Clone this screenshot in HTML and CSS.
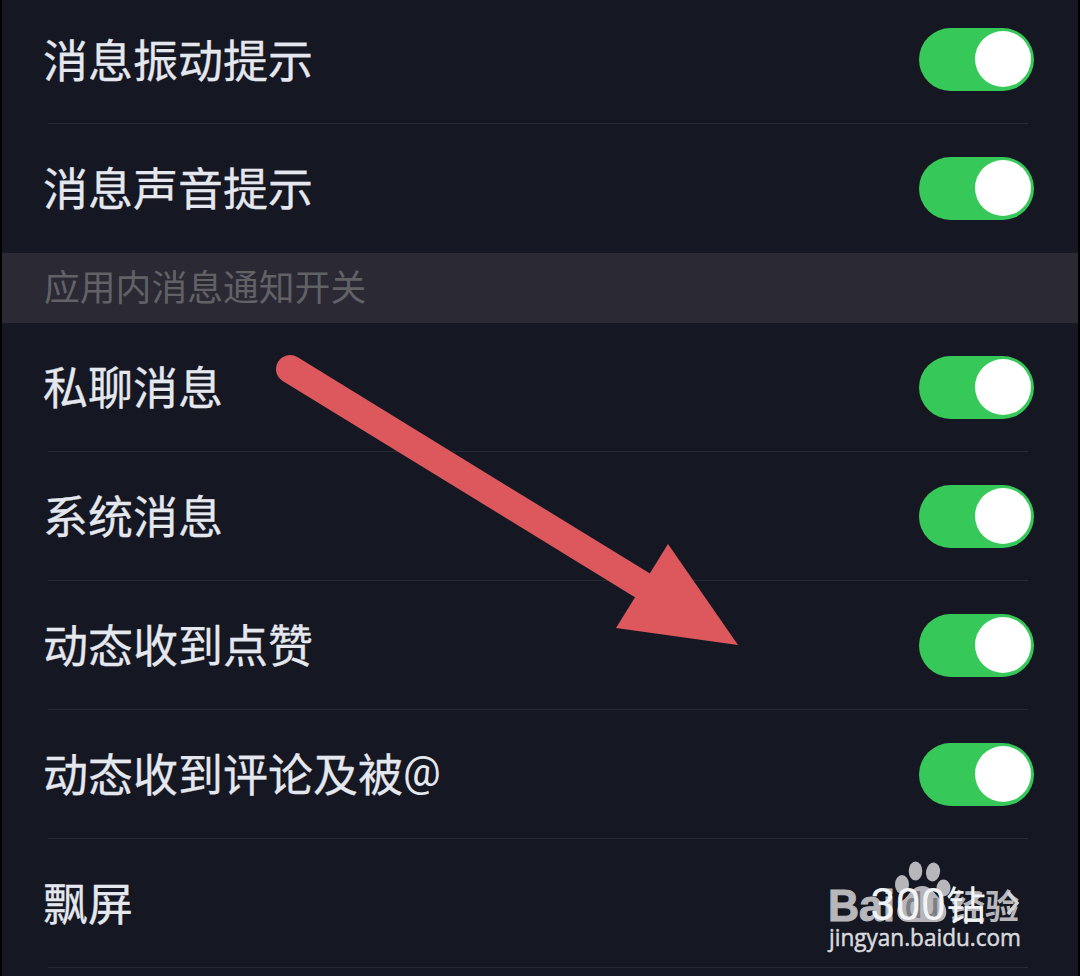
FILE: index.html
```html
<!DOCTYPE html>
<html lang="zh-CN">
<head>
    <meta charset="UTF-8">
    <meta name="viewport" content="width=device-width, initial-scale=1.0">
    <title>消息通知</title>
    <link rel="stylesheet" href="styles.css">
</head>
<body>

    <div class="settings">
        <div class="row">
            <span class="label">消息振动提示</span>
            <span class="toggle"></span>
        </div>
        <div class="row last">
            <span class="label">消息声音提示</span>
            <span class="toggle"></span>
        </div>

        <div class="section-title">应用内消息通知开关</div>

        <div class="row">
            <span class="label">私聊消息</span>
            <span class="toggle"></span>
        </div>
        <div class="row">
            <span class="label">系统消息</span>
            <span class="toggle"></span>
        </div>
        <div class="row">
            <span class="label">动态收到点赞</span>
            <span class="toggle"></span>
        </div>
        <div class="row">
            <span class="label">动态收到评论及被<span class="at">@</span></span>
            <span class="toggle"></span>
        </div>
        <div class="row">
            <span class="label">飘屏</span>
            <span class="value">
                <span><span class="amount">300</span>钻</span>
                <svg class="chevron" width="13" height="28" viewBox="0 0 13 28">
                    <path d="M1 3 L10 14 L1 25"/>
                </svg>
            </span>
        </div>
    </div>

    <!-- Arrow pointing at the like notification switch -->
    <svg class="arrow" width="464" height="292" viewBox="275 354 464 292">
        <path class="arrow-line" d="M290 369 L650 590"/>
        <path class="arrow-head" d="M668 544 L738 645 L616 628 Z"/>
    </svg>

    <!-- Watermark -->
    <svg class="watermark" width="220" height="110" viewBox="820 855 220 110">
        <g class="brand">
            <text class="latin" x="828" y="921" textLength="67" lengthAdjust="spacingAndGlyphs">Bai</text>
            <ellipse cx="902" cy="884.500" rx="7" ry="9.500"/>
            <ellipse cx="915.500" cy="871" rx="6.800" ry="9.500"/>
            <ellipse cx="933" cy="872" rx="7" ry="9.500" transform="rotate(10 933 872)"/>
            <ellipse cx="943.500" cy="888" rx="7" ry="8.500"/>
            <path d="M922 886 C931 886 934 893 940 899 C949 907 949 922 936 922 H909 C896 922 894 908 902 901 C910 895 912 886 922 886 Z"/>
            <text class="cjk" x="951" y="919" textLength="68">经验</text>
        </g>
        <text class="du" x="905" y="918" textLength="34" lengthAdjust="spacingAndGlyphs">du</text>
        <text class="site" x="829" y="946" textLength="192" lengthAdjust="spacingAndGlyphs">jingyan.baidu.com</text>
    </svg>

</body>
</html>
```
FILE: styles.css
```css
body {
    margin: 0;
    height: 976px;
    overflow: hidden;
    position: relative;
    background-color: #000;
    color: #e5e7ee;
    font-family: "Noto Sans CJK SC", sans-serif;
}
.settings {
    margin: 0 2px;
    height: 976px;
    display: flex;
    flex-direction: column;
    background-color: #151722;
}
.row {
    flex: none;
    height: 129px;
    box-sizing: border-box;
    margin: 0 50px 0 46px;
    border-bottom: 1px solid #262832;
    display: flex;
    align-items: center;
    justify-content: space-between;
}
.row:first-child {
    height: 124px;
    padding-bottom: 4px;
}
.row.last {
    border-bottom-color: transparent;
}
.label {
    margin-left: -5px;
    padding-bottom: 2px;
    font-size: 45px;
    line-height: 60px;
    -webkit-text-stroke: 0.3px #e5e7ee;
}
.at {
    font-family: Roboto, sans-serif;
    font-size: 42px;
    line-height: 1;
    position: relative;
    top: -6px;
    -webkit-text-stroke: 0;
}
.toggle {
    width: 115px;
    height: 63px;
    box-sizing: border-box;
    margin-right: -6px;
    padding: 3px;
    border-radius: 32px;
    background-color: #37c85a;
    display: flex;
    justify-content: flex-end;
}
.toggle::after {
    content: "";
    width: 56px;
    height: 56px;
    border-radius: 50%;
    background-color: #fff;
}
.section-title {
    flex: none;
    height: 70px;
    box-sizing: border-box;
    padding: 0 0 5px 42px;
    background-color: #2b2934;
    color: #626166;
    font-size: 35.8px;
    line-height: 65px;
}
.value {
    margin-right: 8px;
    position: relative;
    z-index: 2;
    display: flex;
    align-items: center;
    gap: 21px;
    color: #f2f3f5;
    font-size: 40px;
    line-height: 60px;
}
.amount {
    font-family: Roboto, sans-serif;
    font-size: 45px;
    line-height: 1;
}
.chevron path {
    fill: none;
    stroke: #d2d3d6;
    stroke-width: 3.5;
}
.arrow {
    position: absolute;
    left: 275px;
    top: 354px;
}
.arrow-line {
    fill: none;
    stroke: #dc585d;
    stroke-width: 28;
    stroke-linecap: round;
}
.arrow-head {
    fill: #dc585d;
}
.watermark {
    position: absolute;
    left: 820px;
    top: 855px;
}
.brand {
    fill: #d4d4d6;
    opacity: 0.85;
}
.latin {
    stroke: #d4d4d6;
    stroke-width: 1px;
    font-family: "Liberation Sans", sans-serif;
    font-size: 45px;
    font-weight: bold;
}
.cjk {
    font-size: 34px;
    font-weight: bold;
}
.du {
    fill: #7c7e84;
    font-family: "Liberation Sans", sans-serif;
    font-size: 36px;
    font-weight: bold;
}
.site {
    fill: #d9dade;
    stroke: #d9dade;
    stroke-width: 0.5px;
    font-family: "Open Sans", "Noto Sans", sans-serif;
    font-size: 23px;
}
```
